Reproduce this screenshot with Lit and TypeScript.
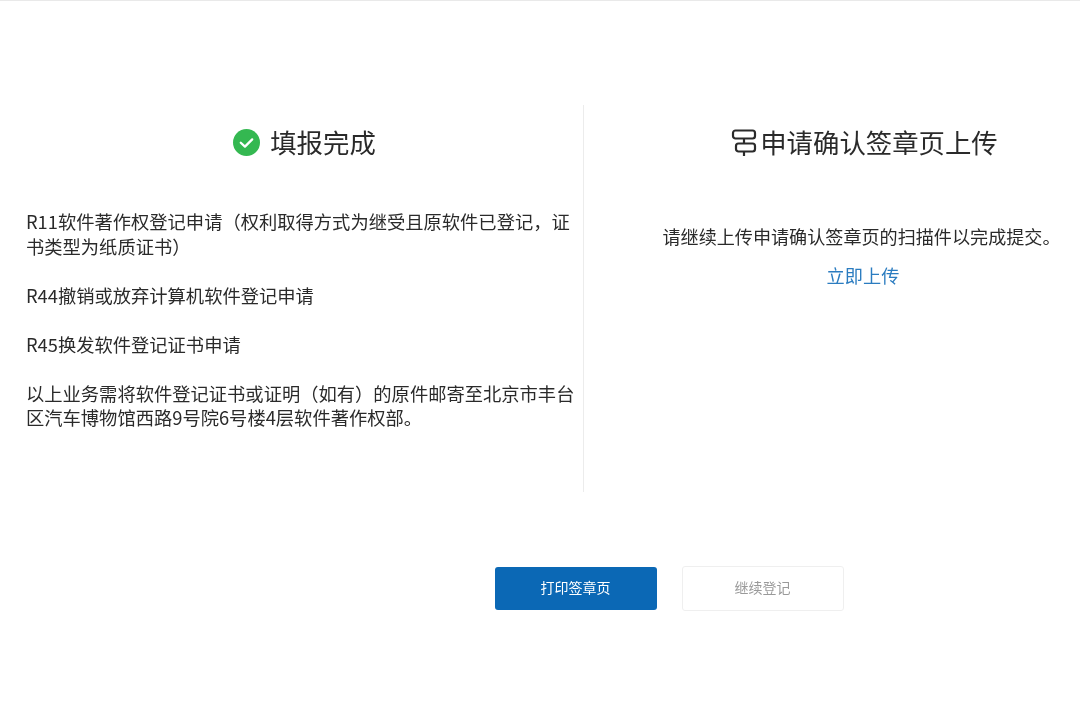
import { LitElement, html, css } from "lit";
import { customElement } from "lit/decorators.js";

@customElement("app-root")
export class AppRoot extends LitElement {
  static styles = css`
    :host {
      display: block;
      width: 1080px;
      height: 707px;
      background: #fff;
      overflow: hidden;
      font-family: "Noto Sans CJK SC", "Liberation Sans", sans-serif;
      color: #2a2a2a;
      box-sizing: border-box;
      border-top: 1px solid #e9e9e9;
    }
    .page {
      display: flex;
      flex-direction: column;
      padding-top: 104px;
      filter: blur(0.55px);
    }
    .cols {
      display: flex;
      height: 387px;
    }
    .left {
      width: 584px;
      box-sizing: border-box;
      padding: 20px 0 0 26px;
      border-right: 1px solid #ececec;
    }
    .right {
      flex: 1;
      padding-top: 20px;
      display: flex;
      flex-direction: column;
      align-items: center;
    }
    .title {
      display: flex;
      align-items: center;
      justify-content: center;
      font-size: 26.4px;
      line-height: 34px;
      font-weight: 400;
      margin: 0;
    }
    .left .title {
      gap: 10px;
      margin-bottom: 50px;
    }
    .right .title {
      gap: 2px;
      margin-bottom: 64px;
      padding-left: 64px;
    }
    .list {
      width: 552px;
      font-size: 18.3px;
      line-height: 24.5px;
    }
    .list p {
      margin: 0 0 24.6px;
    }
    .note {
      margin: 0 0 13px;
      font-size: 18.1px;
      line-height: 26px;
      padding-left: 59px;
    }
    .link {
      font-size: 18.2px;
      line-height: 26px;
      color: #2b7cc0;
      text-decoration: none;
      padding-left: 62px;
    }
    .actions {
      display: flex;
      justify-content: center;
      align-items: center;
      gap: 25px;
      margin-top: 74px;
      padding-left: 258px;
    }
    .btn {
      width: 162px;
      height: 43px;
      box-sizing: border-box;
      border-radius: 3px;
      font: inherit;
      font-size: 14px;
      display: flex;
      align-items: center;
      justify-content: center;
      padding: 0 0 3px;
    }
    .primary {
      background: #0b68b5;
      border: none;
      color: #fff;
    }
    .secondary {
      height: 45px;
      background: #fff;
      border: 1px solid #efefef;
      color: #9a9a9a;
    }
  `;

  render() {
    return html`
      <div class="page">
        <div class="cols">
          <section class="left">
            <h2 class="title">
              <svg width="27" height="27" viewBox="0 0 26 26" aria-hidden="true">
                <circle cx="13" cy="13" r="13" fill="#34b851"></circle>
                <path d="M7.5 13.2l4 3.8 7-7" fill="none" stroke="#fff" stroke-width="2.2" stroke-linecap="round" stroke-linejoin="round"></path>
              </svg>
              填报完成
            </h2>
            <div class="list">
              <p>R11软件著作权登记申请（权利取得方式为继受且原软件已登记，证书类型为纸质证书）</p>
              <p>R44撤销或放弃计算机软件登记申请</p>
              <p>R45换发软件登记证书申请</p>
              <p>以上业务需将软件登记证书或证明（如有）的原件邮寄至北京市丰台区汽车博物馆西路9号院6号楼4层软件著作权部。</p>
            </div>
          </section>
          <section class="right">
            <h2 class="title">
              <svg width="28" height="30" viewBox="0 0 28 30" aria-hidden="true" fill="none" stroke="#2a2a2a" stroke-width="2.2">
                <rect x="3" y="3.5" width="22" height="8" rx="2.5"></rect>
                <path d="M14 11.5v5"></path>
                <rect x="6" y="16.5" width="19" height="8" rx="2.5"></rect>
                <path d="M14 24.5v4.5"></path>
              </svg>
              申请确认签章页上传
            </h2>
            <p class="note">请继续上传申请确认签章页的扫描件以完成提交。</p>
            <a class="link" href="#">立即上传</a>
          </section>
        </div>
        <div class="actions">
          <button class="btn primary">打印签章页</button>
          <button class="btn secondary">继续登记</button>
        </div>
      </div>
    `;
  }
}
